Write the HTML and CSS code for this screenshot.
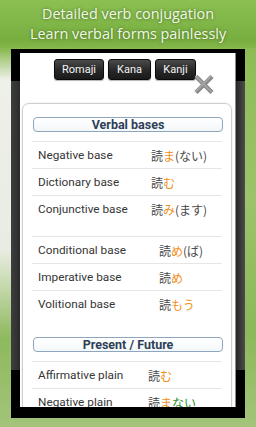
FILE: index.html
```html
<!DOCTYPE html>
<html>
<head>
<meta charset="utf-8">
<link rel="stylesheet" href="styles.css">
</head>
<body>
<div class="page">
  <header class="promo">
    <div>Detailed verb conjugation</div>
    <div>Learn verbal forms painlessly</div>
  </header>
  <div class="phone">
    <div class="dialog">
      <div class="tabs">
        <button class="tab">Romaji</button>
        <button class="tab">Kana</button>
        <button class="tab">Kanji</button>
      </div>
      <svg class="close" width="22" height="21" viewBox="0 0 22 21">
        <path d="M3 2.5 L19 18.5 M19 2.5 L3 18.5" stroke="#8a8a8a" stroke-width="4.5" fill="none"/>
        <path d="M3 2.5 L19 18.5 M19 2.5 L3 18.5" stroke="#a5a5a5" stroke-width="1.5" fill="none" transform="translate(-0.6,-0.6)"/>
      </svg>
      <div class="card">
        <section class="section">
          <h2 class="sec-title">Verbal bases</h2>
          <div class="tbl t1">
            <div class="row"><span class="lbl">Negative base</span><span class="jp">読<b class="o">ま</b>(ない)</span></div>
            <div class="row"><span class="lbl">Dictionary base</span><span class="jp">読<b class="o">む</b></span></div>
            <div class="row"><span class="lbl">Conjunctive base</span><span class="jp">読<b class="o">み</b>(ます)</span></div>
          </div>
          <div class="tbl t2">
            <div class="row"><span class="lbl">Conditional base</span><span class="jp">読<b class="o">め</b>(ば)</span></div>
            <div class="row"><span class="lbl">Imperative base</span><span class="jp">読<b class="o">め</b></span></div>
            <div class="row"><span class="lbl">Volitional base</span><span class="jp">読<b class="o">もう</b></span></div>
          </div>
        </section>
        <section class="section next">
          <h2 class="sec-title">Present / Future</h2>
          <div class="tbl t3">
            <div class="row"><span class="lbl">Affirmative plain</span><span class="jp">読<b class="o">む</b></span></div>
            <div class="row"><span class="lbl">Negative plain</span><span class="jp">読<b class="o">ま</b><b class="g">ない</b></span></div>
          </div>
        </section>
      </div>
    </div>
  </div>
</div>
</body>
</html>
```

FILE: styles.css
```css
html, body {
  margin: 0;
  padding: 0;
}
body {
  width: 256px;
  height: 427px;
  overflow: hidden;
  font-family: Roboto, "Noto Sans", sans-serif;
  background:
    linear-gradient(to bottom, rgba(240,242,236,0) 0, #eef0ea 30px, #e8ece2 200px, rgba(220,230,205,0) 290px) 0 50px / 11px 300px no-repeat,
    linear-gradient(to bottom, #84b84a 0, #7fb244 30px, #8fbc58 55px, #9cc36a 200px, #8cb85a 330px, #a3c47a 427px);
}
.page {
  display: flex;
  flex-direction: column;
}
.promo {
  height: 44px;
  padding-top: 4px;
  margin-bottom: 1px;
  text-align: center;
  font-family: "Open Sans", "Noto Sans", sans-serif;
  font-size: 14.4px;
  line-height: 20px;
  color: #f2f8e8;
  text-shadow: 0 0 3px rgba(40,70,10,0.7);
  background: linear-gradient(to bottom, #8cc052 0, #78ad40 40px, #86b84c 49px);
}
.phone {
  width: 215px;
  height: 354px;
  margin: 0 0 0 11px;
  padding: 4px 10px 11px 9px;
  background:
    linear-gradient(to bottom, #000 0, #000 32px, transparent 32px, transparent 321px, #000 321px),
    linear-gradient(to right, #3e3e3e 0, #2c2c2c 9px, #222 224px, #4c4c4c 234px);
}
.dialog {
  position: relative;
  height: 354px;
  background: #fff;
  overflow: hidden;
  box-shadow: 1px 0 0 #8a8a8a;
}
.tabs {
  display: flex;
  gap: 4px;
  padding-left: 34px;
  margin-top: 6px;
}
.tab {
  height: 21px;
  padding: 0;
  border: 1px solid #0c0c0c;
  border-radius: 3px;
  background: linear-gradient(to bottom, #4a4a4a 0, #2a2a2a 50%, #1a1a1a 100%);
  color: #f4f4f4;
  font-family: Roboto, "Noto Sans", sans-serif;
  font-size: 11px;
  line-height: 19px;
  box-shadow: 0 1px 1px rgba(0,0,0,0.3);
}
.tab:nth-child(1) { width: 50px; }
.tab:nth-child(2) { width: 43px; }
.tab:nth-child(3) { width: 41px; }
.close {
  position: absolute;
  left: 173px;
  top: 21px;
}
.card {
  margin: 23px 0 0 2px;
  width: 190px;
  padding: 13px 8px 0 10px;
  border: 1px solid #cfcfcf;
  border-radius: 7px;
  box-shadow: 0 0 2px rgba(0,0,0,0.12);
  height: 400px;
}
.section.next {
  margin-top: 20px;
}
.sec-title {
  margin: 0 0 9px 0;
  height: 13px;
  border: 1px solid #8ea6bd;
  border-radius: 4px;
  background: linear-gradient(to bottom, #ffffff, #f4f7fa);
  text-align: center;
  font-size: 12.5px;
  line-height: 13px;
  font-weight: bold;
  color: #2d4056;
}
.tbl + .tbl {
  margin-top: 14px;
}
.tbl {
  margin-left: -1px;
  margin-right: 1px;
}
.row {
  display: grid;
  height: 26px;
  border-top: 1px solid #e6e6e6;
  align-items: center;
  font-size: 11.8px;
  color: #363636;
}
.t1 .row { grid-template-columns: 119px 1fr; }
.t2 .row { grid-template-columns: 127px 1fr; }
.t3 .row { grid-template-columns: 116px 1fr; }
.lbl {
  padding-left: 6px;
  white-space: nowrap;
}
.jp {
  font-family: "Noto Sans CJK JP", sans-serif;
  font-size: 12px;
  color: #484848;
  white-space: nowrap;
}
.jp b {
  font-weight: normal;
}
.o { color: #f0901c; }
.g { color: #23922a; }
```
